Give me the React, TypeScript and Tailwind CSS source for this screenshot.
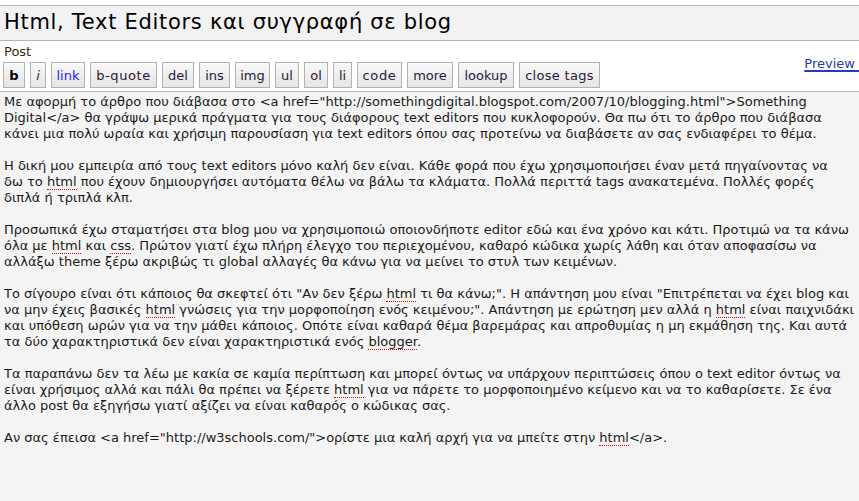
import React from 'react'

type Seg = string | { w: string }

// spell-checker underline for unknown words
const Misspelled: React.FC<{ children: React.ReactNode }> = ({ children }) => (
  <span className="border-b border-dotted border-[#ff0000]">{children}</span>
)

const paragraphs: Seg[][][] = [
  [
    ['Με αφορμή το άρθρο που διάβασα στο <a href="http://somethingdigital.blogspot.com/2007/10/blogging.html">Something'],
    ['Digital</a> θα γράψω μερικά πράγματα για τους διάφορους text editors που κυκλοφορούν. Θα πω ότι το άρθρο που διάβασα'],
    ['κάνει μια πολύ ωραία και χρήσιμη παρουσίαση για text editors όπου σας προτείνω να διαβάσετε αν σας ενδιαφέρει το θέμα.']
  ],
  [
    ['Η δική μου εμπειρία από τους text editors μόνο καλή δεν είναι. Κάθε φορά που έχω χρησιμοποιήσει έναν μετά πηγαίνοντας να'],
    ['δω το ', { w: 'html' }, ' που έχουν δημιουργήσει αυτόματα θέλω να βάλω τα κλάματα. Πολλά περιττά tags ανακατεμένα. Πολλές φορές'],
    ['διπλά ή τριπλά κλπ.']
  ],
  [
    ['Προσωπικά έχω σταματήσει στα blog μου να χρησιμοποιώ οποιονδήποτε editor εδώ και ένα χρόνο και κάτι. Προτιμώ να τα κάνω'],
    ['όλα με ', { w: 'html' }, ' και ', { w: 'css' }, '. Πρώτον γιατί έχω πλήρη έλεγχο του περιεχομένου, καθαρό κώδικα χωρίς λάθη και όταν αποφασίσω να'],
    ['αλλάξω theme ξέρω ακριβώς τι global αλλαγές θα κάνω για να μείνει το στυλ των κειμένων.']
  ],
  [
    ['Το σίγουρο είναι ότι κάποιος θα σκεφτεί ότι "Αν δεν ξέρω ', { w: 'html' }, ' τι θα κάνω;". Η απάντηση μου είναι "Επιτρέπεται να έχει blog και'],
    ['να μην έχεις βασικές ', { w: 'html' }, ' γνώσεις για την μορφοποίηση ενός κειμένου;". Απάντηση με ερώτηση μεν αλλά η ', { w: 'html' }, ' είναι παιχνιδάκι'],
    ['και υπόθεση ωρών για να την μάθει κάποιος. Οπότε είναι καθαρά θέμα βαρεμάρας και απροθυμίας η μη εκμάθηση της. Και αυτά'],
    ['τα δύο χαρακτηριστικά δεν είναι χαρακτηριστικά ενός ', { w: 'blogger' }, '.']
  ],
  [
    ['Τα παραπάνω δεν τα λέω με κακία σε καμία περίπτωση και μπορεί όντως να υπάρχουν περιπτώσεις όπου ο text editor όντως να'],
    ['είναι χρήσιμος αλλά και πάλι θα πρέπει να ξέρετε ', { w: 'html' }, ' για να πάρετε το μορφοποιημένο κείμενο και να το καθαρίσετε. Σε ένα'],
    ['άλλο post θα εξηγήσω γιατί αξίζει να είναι καθαρός ο κώδικας σας.']
  ],
  [['Αν σας έπεισα <a href="http://w3schools.com/">ορίστε μια καλή αρχή για να μπείτε στην ', { w: 'html' }, '</a>.']]
]

// widths measured from the original toolbar
const buttons = [
  { label: 'b', cls: 'w-[22px] font-bold text-black' },
  { label: 'i', cls: 'w-[16px] italic text-[#3a1a5a]' },
  { label: 'link', cls: 'w-[34px] text-[#2a1aff]' },
  { label: 'b-quote', cls: 'w-[67px] tracking-[0.6px] text-[#2a1a3a]' },
  { label: 'del', cls: 'w-[32px] text-[#2a1a3a]' },
  { label: 'ins', cls: 'w-[31px] text-[#2a1a3a]' },
  { label: 'img', cls: 'w-[35px] text-[#2a1a3a]' },
  { label: 'ul', cls: 'w-[24px] text-[#2a1a3a]' },
  { label: 'ol', cls: 'w-[24px] text-[#2a1a3a]' },
  { label: 'li', cls: 'w-[19px] text-[#2a1a3a]' },
  { label: 'code', cls: 'w-[45px] tracking-[0.6px] text-[#2a1a3a]' },
  { label: 'more', cls: 'w-[46px] text-[#2a1a3a]' },
  { label: 'lookup', cls: 'w-[56px] text-[#2a1a3a]' },
  { label: 'close tags', cls: 'w-[81px] tracking-[0.3px] text-[#2a1a3a]' }
]

export default function App() {
  return (
    <div className="w-[859px] h-[501px] bg-white overflow-hidden font-['DejaVu_Sans',Verdana,sans-serif] flex flex-col">
      {/* Τίτλος */}
      <div className="mt-[5px] h-[36px] border-y border-[#b4b4b4] bg-[#f2f2f2] flex items-center px-[4px] text-[21px] tracking-[0.7px] text-black whitespace-nowrap">
        Html, Text Editors και συγγραφή σε blog
      </div>

      <div className="px-[4px] pt-[3px] text-[13px] leading-[16px] text-[#3a2a10]">Post</div>

      {/* Γραμμή εργαλείων */}
      <div className="flex items-start justify-between pl-[3px] mt-[2px] h-[29px]">
        <div className="flex gap-[5px]">
          {buttons.map((b) => (
            <button
              key={b.label}
              className={`h-[26px] flex items-center justify-center whitespace-nowrap border border-[#b2b2b2] bg-gradient-to-b from-[#f8f8f8] to-[#e6e6e6] text-[13px] leading-none ${b.cls}`}
            >
              {b.label}
            </button>
          ))}
        </div>
        <a className="text-[13px] leading-[16px] text-[#2a3ab0] underline decoration-2 underline-offset-[2px] whitespace-nowrap -mt-[6px] -mr-[8px]">
          Preview »
        </a>
      </div>

      {/* Κείμενο */}
      <div className="flex-1 border-t border-[#b4b4b4] bg-[#f4f4f4] px-[4px] pt-[2px] text-[13px] leading-[16px] text-[#1a1a1a] whitespace-nowrap overflow-hidden">
        {paragraphs.map((p, pi) => (
          <div key={pi} className={pi < paragraphs.length - 1 ? 'mb-[16px]' : ''}>
            {p.map((line, li) => (
              <div key={li}>
                {line.map((s, si) => (typeof s === 'string' ? <span key={si}>{s}</span> : <Misspelled key={si}>{s.w}</Misspelled>))}
              </div>
            ))}
          </div>
        ))}
      </div>
    </div>
  )
}
